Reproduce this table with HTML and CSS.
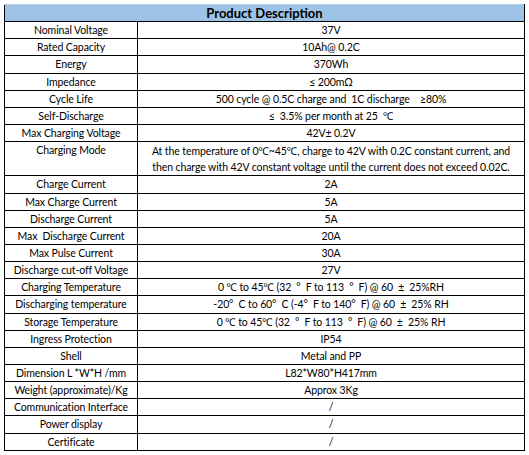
FILE: index.html
```html
<!DOCTYPE html>
<html lang="en">
<head>
  <meta charset="UTF-8" />
  <title>Product Description</title>
  <link rel="stylesheet" href="styles.css">
</head>
<body>
  <table class="spec">
    <colgroup><col class="col-name"><col class="col-value"></colgroup>
    <tr><th colspan="2" class="title">Product Description</th></tr>
    <tr><td>Nominal Voltage</td><td>37V</td></tr>
    <tr><td>Rated Capacity</td><td>10Ah@ 0.2C</td></tr>
    <tr><td>Energy</td><td>370Wh</td></tr>
    <tr><td>Impedance</td><td>≤ 200mΩ</td></tr>
    <tr><td>Cycle Life</td><td>500 cycle @ 0.5C charge and &nbsp;1C discharge &nbsp;&nbsp;&nbsp;≥80%</td></tr>
    <tr><td>Self-Discharge</td><td>≤ &nbsp;3.5% per month at 25 &nbsp;℃</td></tr>
    <tr><td>Max Charging Voltage</td><td>42V± 0.2V</td></tr>
    <tr class="tall"><td class="top">Charging Mode</td><td>At the temperature of 0℃~45℃, charge to 42V with 0.2C constant current, and<br>then charge with 42V constant voltage until the current does not exceed 0.02C.</td></tr>
    <tr><td>Charge Current</td><td>2A</td></tr>
    <tr><td>Max Charge Current</td><td>5A</td></tr>
    <tr><td>Discharge Current</td><td>5A</td></tr>
    <tr><td>Max &nbsp;Discharge Current</td><td>20A</td></tr>
    <tr><td>Max Pulse Current</td><td>30A</td></tr>
    <tr><td>Discharge cut-off Voltage</td><td>27V</td></tr>
    <tr><td>Charging Temperature</td><td>0 ℃ to 45℃ (32 &nbsp;° &nbsp;F to 113 &nbsp;° &nbsp;F) @ 60 &nbsp;± &nbsp;25%RH</td></tr>
    <tr><td>Discharging temperature</td><td>-20° &nbsp;C to 60° &nbsp;C (-4° &nbsp;F to 140° &nbsp;F) @ 60 &nbsp;± &nbsp;25% RH</td></tr>
    <tr><td>Storage Temperature</td><td>0 ℃ to 45℃ (32 &nbsp;° &nbsp;F to 113 &nbsp;° &nbsp;F) @ 60 &nbsp;± &nbsp;25% RH</td></tr>
    <tr><td>Ingress Protection</td><td>IP54</td></tr>
    <tr><td>Shell</td><td>Metal and PP</td></tr>
    <tr><td>Dimension L *W*H /mm</td><td>L82*W80*H417mm</td></tr>
    <tr><td>Weight (approximate)/Kg</td><td>Approx 3Kg</td></tr>
    <tr><td>Communication Interface</td><td>/</td></tr>
    <tr><td>Power display</td><td>/</td></tr>
    <tr><td>Certificate</td><td>/</td></tr>
  </table>
</body>
</html>
```

FILE: styles.css
```css
body {
  margin: 0;
  background: #fff;
  font-family: Lato, "Noto Sans", sans-serif;
  font-size: 10.5px;
  letter-spacing: -0.1px;
  color: #000;
}
.spec {
  margin: 4px 0 0 4px;
  width: 521px;
  height: 447px;
  border-collapse: collapse;
  table-layout: fixed;
}
.col-name {
  width: 133px;
}
.spec td,
.spec th {
  border: 1px solid #000;
  padding: 0 2px;
  height: 16px;
  text-align: center;
  white-space: nowrap;
  line-height: 16px;
}
.spec .title {
  background: #9dc3e6;
  font-size: 13px;
  letter-spacing: 0;
  font-weight: bold;
  border-top-color: #b8cde0;
}
.spec .tall td {
  height: 33px;
}
.spec .top {
  vertical-align: top;
}
```
